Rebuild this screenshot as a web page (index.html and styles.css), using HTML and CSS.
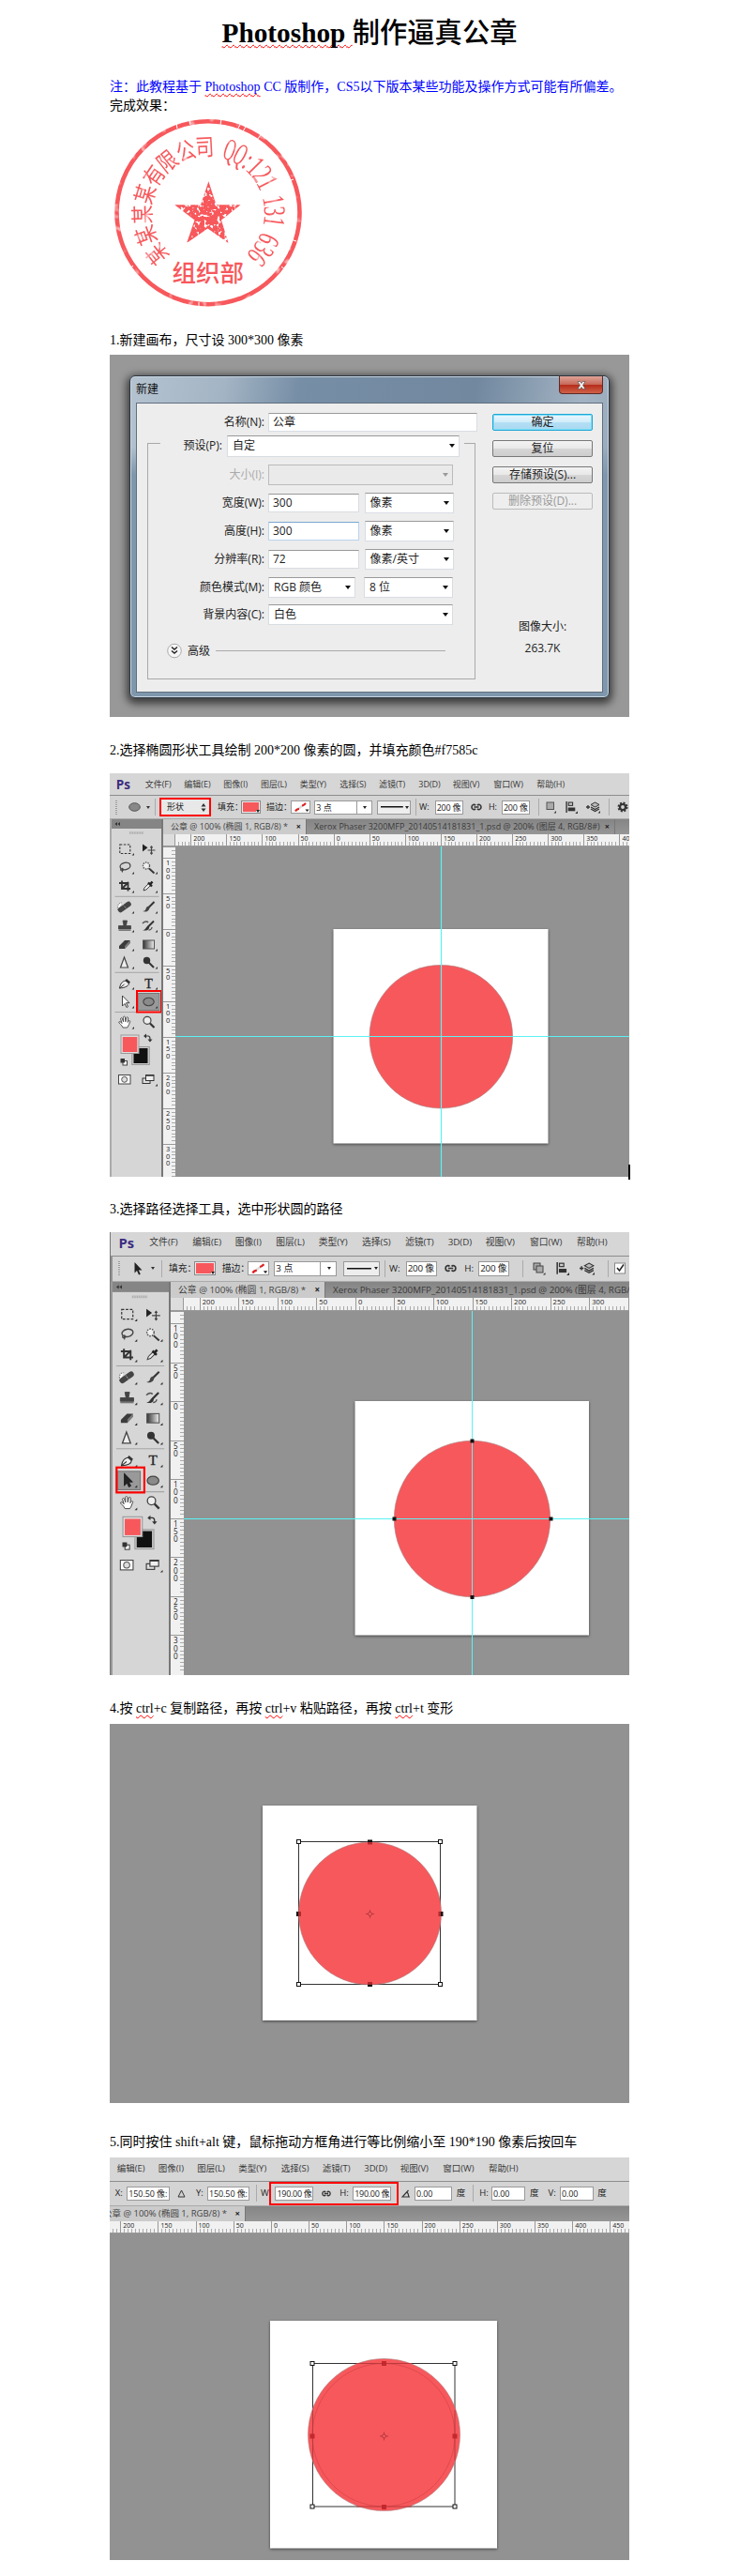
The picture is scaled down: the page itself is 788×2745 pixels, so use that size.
FILE: index.html
```html
<!DOCTYPE html>
<html lang="zh-CN">
<head>
<meta charset="utf-8">
<title>Photoshop 制作逼真公章</title>
<link rel="stylesheet" href="styles.css">
</head>
<body>
<svg class="defs" width="0" height="0">
  <symbol id="tools" viewBox="117 873 57 385" preserveAspectRatio="xMinYMin slice">
    <rect x="117" y="873" width="57" height="10" fill="#858585"/>
    <path d="M125 876v4l-2.500-2zM128 876v4l-2.500-2z" fill="#333"/>
    <path d="M138 887.500h15" stroke="#aaa" stroke-width="2.500" stroke-dasharray="1 .6"/>
    <path d="M122.500 955.300h47M122.500 1036.300h47M122.500 1078.500h47" stroke="#a5a5a5"/>
    <g fill="#333">
      <path d="M143 909v2.500h-2.500zM143 929v2.500h-2.500zM168 929v2.500h-2.500zM143 949v2.500h-2.500zM168 949v2.500h-2.500zM143 971v2.500h-2.500zM168 971v2.500h-2.500zM143 991v2.500h-2.500zM168 991v2.500h-2.500zM143 1011v2.500h-2.500zM168 1011v2.500h-2.500zM143 1030v2.500h-2.500zM168 1030v2.500h-2.500zM143 1052v2.500h-2.500zM168 1052v2.500h-2.500zM143 1072v2.500h-2.500zM168 1072v2.500h-2.500zM143 1094v2.500h-2.500zM168 1155v2.500h-2.500z"/>
    </g>
    <rect x="127.800" y="900" width="11" height="9.500" fill="none" stroke="#333" stroke-width="1.100" stroke-dasharray="2.500 1.500"/>
    <path d="M152 899.500v8l5.500-4.200z" fill="#222"/>
    <path d="M161.500 902v8M157.500 906h8M160.300 903.300l1.200-1.500 1.200 1.500M160.300 908.700l1.200 1.500 1.200-1.500" fill="none" stroke="#444" stroke-width="1.100"/>
    <ellipse cx="133.500" cy="923" rx="5.500" ry="3.700" transform="rotate(-12 133.500 923)" fill="none" stroke="#444" stroke-width="1.300"/>
    <path d="M129.500 925.500c-2 1.500 0 3 1.500 2s-.5-2-.5-2v4" fill="none" stroke="#444" stroke-width="1.100"/>
    <path d="M159 925.500l5.500 5" stroke="#333" stroke-width="1.800"/>
    <circle cx="156" cy="922.500" r="3.500" fill="#eee" stroke="#555" stroke-width="1.300" stroke-dasharray="1.500 1"/>
    <path d="M127 941h9.500v8.500M130 938.500v8.500h9M130 947l7-7" fill="none" stroke="#333" stroke-width="1.800"/>
    <path d="M153 949l1-3 5-5 2 2-5 5z" fill="#eee" stroke="#444"/>
    <path d="M158 940.500l4 4M160 942.500l2.500-3" stroke="#222" stroke-width="2.400"/>
    <path d="M126 970c-1-5 0-8 4-8" fill="#fff" stroke="#777" stroke-dasharray="1.500 1"/>
    <path d="M128.500 969.500l8.500-6" stroke="#444" stroke-width="5.500" stroke-linecap="round"/>
    <path d="M131.500 964.500l3.500 4" stroke="#aaa" stroke-dasharray="1 1"/>
    <path d="M164.500 961l-6 6" stroke="#333" stroke-width="2"/>
    <path d="M159.500 966c-2-1-3.500.5-4 2.500s-2 2.300-3.500 2.500c4 1.500 8-.5 7.500-5z" fill="#444"/>
    <path d="M131 981h4.500l-1 5.500h5V990h-13v-3.500h5.500zM126.500 991.300h13" fill="#444" stroke="#444" stroke-width=".8"/>
    <path d="M164 981.500l-6 6" stroke="#333" stroke-width="2"/>
    <path d="M159 986.500c-3-1-3 4.500-7 4.500 4 1.500 8 0 7-4.500z" fill="#333"/>
    <path d="M152 984c2-2.500 5-2.500 6-1M162 988c0 2-2 3-3.500 3" fill="none" stroke="#555" stroke-width="1.400"/>
    <path d="M127 1008l6-6h6l-5.500 6zM127 1008h6.500v3H127z" fill="#3c3c3c"/>
    <path d="M133.500 1011v-3l5.500-6v3z" fill="#777"/>
    <rect x="152.500" y="1002" width="12" height="9" fill="url(#grad)" stroke="#555"/>
    <path d="M132.500 1020l4 11h-8z" fill="#eee" stroke="#444" stroke-width="1.200"/>
    <circle cx="156.500" cy="1023.500" r="3.700" fill="#333"/>
    <path d="M158.500 1025.500l5.500 5.500" stroke="#333" stroke-width="2"/>
    <path d="M127.500 1053c1-6 4-8 7.500-8l2.500 2.500c0 3-3.500 5-10 5.500zl5-4" fill="#eee" stroke="#333"/>
    <path d="M135 1043l4 3.500-1.700 2-4-3.500z" fill="#333"/>
    <text x="158.500" y="1052.500" text-anchor="middle" class="tool-t">T</text>
    <path d="M130.500 1061v11l2.500-2.500 2 4 1.500-.8-2-4h3.500z" fill="#fff" stroke="#333" stroke-width=".9"/>
    <ellipse cx="158.500" cy="1067.500" rx="5.700" ry="4.200" fill="#8a8a8a" stroke="#444" stroke-width="1.100"/>
    <path d="M131 1095c-1-3-4.500-4.500-4.300-6 .8-1 2.300 0 3.300 1.500l-1.500-5c.5-1.200 1.700-.8 2 .3l1 3-.2-5c.6-1 1.800-1 2.100 0l.4 5 1-4.500c.8-1 1.900-.4 1.900.6l-.5 4.500c1-2 2.500-2.300 2.600-1-.8 2-1.500 4.600-3 6.600z" fill="#fff" stroke="#444" stroke-width=".9"/>
    <circle cx="157" cy="1087.300" r="4" fill="#eee" stroke="#444" stroke-width="1.200"/>
    <path d="M160 1090.500l4.500 4.500" stroke="#333" stroke-width="2.200"/>
    <path d="M155 1104h3q2 0 2 3v2" fill="none" stroke="#333" stroke-width="1.200"/>
    <path d="M156 1101.500v5l-3-2.500zM157.500 1107.500h5l-2.500 3z" fill="#333"/>
    <rect x="140.800" y="1115.500" width="18.500" height="19" fill="#ccc" stroke="#999"/>
    <rect x="142.500" y="1117" width="15" height="16" fill="#111"/>
    <rect x="129" y="1103" width="19" height="19.500" fill="#ddd" stroke="#999"/>
    <rect x="130.800" y="1105" width="15.500" height="16" fill="#f7585c"/>
    <rect x="131" y="1130.500" width="4.500" height="4.500" fill="#fff" stroke="#444"/>
    <rect x="128.500" y="1128" width="4.500" height="4.500" fill="#333"/>
    <rect x="126.500" y="1145.500" width="12.500" height="9.500" fill="#fff" stroke="#444"/>
    <circle cx="132.700" cy="1150.300" r="3" fill="#ddd" stroke="#555"/>
    <rect x="152" y="1149" width="8" height="5.500" fill="#ddd" stroke="#333"/>
    <rect x="155.500" y="1145.500" width="8.500" height="6" fill="#eee" stroke="#333"/>
    <path d="M155.500 1146h8.500" stroke="#333" stroke-width="1.500"/>
  </symbol>
  <linearGradient id="grad"><stop stop-color="#333"/><stop offset="1" stop-color="#eee"/></linearGradient>
  <symbol id="link" viewBox="0 0 12 8"><path d="M5 2.200C4 .8 1 1 1 4s3 3.200 4 1.800M7 2.200C8 .8 11 1 11 4s-3 3.200-4 1.800M3.500 4h5" fill="none" stroke="#333" stroke-width="1.600"/></symbol>
  <symbol id="stroke-none" viewBox="0 0 21 14"><path d="M5 11l11-8" stroke="#ddd" stroke-width="2.500"/><path d="M5 11.500c1-2 2-2.500 4-2.500M12 5.500c1.500 0 2.500-1 4-2.500" stroke="#e02020" stroke-width="2" fill="none"/><path d="M15.500 9.500h4l-2 2.500z" fill="#222"/></symbol>
  <symbol id="align" viewBox="0 0 12 12"><path d="M1 0v11" stroke="#333" stroke-width="1.300"/><rect x="3" y="1" width="4" height="3" fill="#ccc" stroke="#333"/><path d="M2.500 6h7v3.500h-7z" fill="#333"/><path d="M12 9.500V12H9.500z" fill="#333"/></symbol>
  <symbol id="stack" viewBox="0 0 15 12"><path d="M0 5.500h4M2 3.500v4" stroke="#333" stroke-width="1.300"/><path d="M5 7.500l4.500 2.500L14 7.500M5 5.500L9.500 8 14 5.500" fill="none" stroke="#333" stroke-width="1.300"/><path d="M5 3l4.500-2.500L14 3 9.500 5.500z" fill="#bbb" stroke="#333"/><path d="M15 9.500V12h-2.500z" fill="#333"/></symbol>
  <symbol id="cross" viewBox="-5 -5 10 10"><circle r="2" fill="none" stroke="#a53338" stroke-width=".8"/><path d="M0-4.500v2.500M0 2v2.500M-4.500 0h2.500M2 0h2.500" stroke="#a53338" stroke-width=".8"/></symbol>
</svg>

<main class="doc">
  <h1 class="title"><span class="sp">Photoshop </span>制作逼真公章</h1>
  <p class="line note">注：此教程基于 <span class="sp">Photoshop</span> CC 版制作，CS5以下版本某些功能及操作方式可能有所偏差。</p>
  <p class="line">完成效果：</p>

  <svg class="seal" viewBox="117 122 210 210" width="210" height="210">
    <defs>
      <filter id="worn" x="-5%" y="-5%" width="110%" height="110%">
        <feTurbulence type="fractalNoise" baseFrequency=".28" numOctaves="2" seed="8" result="n"/>
        <feColorMatrix in="n" type="matrix" values="0 0 0 0 0  0 0 0 0 0  0 0 0 0 0  0 7 0 0 -2.050" result="m"/>
        <feComposite in="SourceGraphic" in2="m" operator="in"/>
      </filter>
      <filter id="faint" x="-5%" y="-5%" width="110%" height="110%">
        <feTurbulence type="fractalNoise" baseFrequency=".1" numOctaves="2" seed="5" result="n"/>
        <feColorMatrix in="n" type="matrix" values="0 0 0 0 0  0 0 0 0 0  0 0 0 0 0  0 3 0 0 -.2" result="m"/>
        <feComposite in="SourceGraphic" in2="m" operator="in"/>
      </filter>
    </defs>
    <circle cx="222" cy="226.700" r="97.500" fill="none" stroke="#f7585c" stroke-width="4.600" filter="url(#faint)"/>
    <path d="M142 143l3 4M150 141l2 4M188 131l1 6M202 128l1 5M236 127l-1 6M256 133l-3 5M262 135l-3 5M278 144l-4 5M313 191l-5 2M316 257l-6-2M304 287l-4-3M139 286l3-3M212 322v5" stroke="#fff"/>
    <path d="M222.400 193.300L230.500 218.300H256.500L236 234.500 243.500 259 221.500 243.500 199.100 259 207.500 234.500 186.200 218.300H214z" fill="#f7585c" filter="url(#worn)"/>
    <g class="seal-cn" transform="translate(222 226.700)" filter="url(#faint)">
      <text transform="rotate(-129) translate(0 -61) scale(.8 1)">某</text>
      <text transform="rotate(-110) translate(0 -61) scale(.8 1)">某</text>
      <text transform="rotate(-91.500) translate(0 -61) scale(.8 1)">某</text>
      <text transform="rotate(-73.500) translate(0 -61) scale(.8 1)">某</text>
      <text transform="rotate(-55.500) translate(0 -61) scale(.8 1)">有</text>
      <text transform="rotate(-38.500) translate(0 -61) scale(.8 1)">限</text>
      <text transform="rotate(-20) translate(0 -61) scale(.8 1)">公</text>
      <text transform="rotate(-3) translate(0 -61) scale(.8 1)">司</text>
    </g>
    <g class="seal-num" transform="translate(222 226.700)" filter="url(#faint)">
      <text transform="rotate(19) translate(0 -60) scale(.5 1)">Q</text>
      <text transform="rotate(29) translate(0 -60) scale(.5 1)">Q</text>
      <text transform="rotate(37.500) translate(0 -60) scale(.65 1)">:</text>
      <text transform="rotate(45.500) translate(0 -60) scale(.65 1)">1</text>
      <text transform="rotate(54.500) translate(0 -60) scale(.65 1)">2</text>
      <text transform="rotate(63) translate(0 -60) scale(.65 1)">1</text>
      <text transform="rotate(79.500) translate(0 -60) scale(.65 1)">1</text>
      <text transform="rotate(88.500) translate(0 -60) scale(.65 1)">3</text>
      <text transform="rotate(97.500) translate(0 -60) scale(.65 1)">1</text>
      <text transform="rotate(114) translate(0 -60) scale(.65 1)">6</text>
      <text transform="rotate(123.500) translate(0 -60) scale(.65 1)">3</text>
      <text transform="rotate(132.500) translate(0 -60) scale(.65 1)">6</text>
    </g>
    <text x="221.700" y="300" class="seal-dept">组织部</text>
  </svg>

  <p class="line s1">1.新建画布，尺寸设 300*300 像素</p>
  <figure class="fig fig1">
    <div class="win">
      <div class="win-bar"><span>新建</span>
        <b class="close"><svg width="10" height="9" viewBox="0 0 10 9"><path d="M1 .5h2.500L5 2.500 6.500.5H9L6.500 4.500 9 8.500H6.500L5 6.500 3.500 8.500H1l2.500-4z" fill="#fff" stroke="#555" stroke-width=".7"/></svg></b>
      </div>
      <div class="win-body">
        <div class="form">
          <div class="row name"><label>名称(N):</label><span class="in w-name">公章</span></div>
          <div class="group">
            <div class="legend"><label>预设(P):</label><span class="in sel w-preset">自定</span></div>
            <div class="row off"><label>大小(I):</label><span class="in sel w-wide"></span></div>
            <div class="row"><label>宽度(W):</label><span class="in w-num">300</span><span class="in sel w-unit">像素</span></div>
            <div class="row"><label>高度(H):</label><span class="in w-num focus">300</span><span class="in sel w-unit">像素</span></div>
            <div class="row"><label>分辨率(R):</label><span class="in w-num">72</span><span class="in sel w-unit">像素/英寸</span></div>
            <div class="row"><label>颜色模式(M):</label><span class="in sel w-mode">RGB 颜色</span><span class="in sel w-unit">8 位</span></div>
            <div class="row"><label>背景内容(C):</label><span class="in sel w-wide">白色</span></div>
            <div class="adv"><svg width="16" height="17" viewBox="0 0 16 17"><circle cx="8" cy="8.500" r="7.300" fill="#f6f6f6" stroke="#aaa"/><path d="M5 4.500l3 2.500 3-2.500M5 8.500l3 2.500 3-2.500" fill="none" stroke="#222" stroke-width="1.500"/></svg><span>高级</span><hr></div>
          </div>
        </div>
        <div class="side">
          <span class="btn primary">确定</span>
          <span class="btn">复位</span>
          <span class="btn">存储预设(S)...</span>
          <span class="btn dis">删除预设(D)...</span>
          <div class="size"><span>图像大小:</span><span>263.7K</span></div>
        </div>
      </div>
    </div>
  </figure>

  <p class="line s2">2.选择椭圆形状工具绘制 200*200 像素的圆，并填充颜色#f7585c</p>
  <figure class="fig ps fig2">
    <div class="menu"><b class="logo">Ps</b><span>文件(F)</span><span>编辑(E)</span><span>图像(I)</span><span>图层(L)</span><span>类型(Y)</span><span>选择(S)</span><span>滤镜(T)</span><span>3D(D)</span><span>视图(V)</span><span>窗口(W)</span><span>帮助(H)</span></div>
    <div class="opts">
      <i class="grip"></i>
      <svg width="13" height="10" viewBox="0 0 13 10"><ellipse cx="6.500" cy="5" rx="5.800" ry="4.300" fill="#888" stroke="#555"/></svg>
      <i class="caret"></i><i class="sep"></i>
      <span class="shape">形状<svg width="6" height="9" viewBox="0 0 6 9"><path d="M3 0l2.500 3.500h-5zM3 9L.5 5.500h5z" fill="#333"/></svg></span>
      <span>填充：</span><i class="sw"></i><span>描边：</span><svg class="sw2"><use href="#stroke-none"/></svg>
      <span class="box pts">3 点</span><span class="box stroke"></span><i class="sep"></i>
      <span>W:</span><span class="box dim">200 像</span><svg width="12" height="8"><use href="#link"/></svg><span>H:</span><span class="box dim">200 像</span><i class="sep"></i>
      <svg width="12" height="14" viewBox="0 0 12 14"><rect x="1" y="2" width="7.500" height="7.500" fill="#aaa" stroke="#555"/><path d="M11 11v2.500H8.500z" fill="#333"/></svg>
      <svg width="13" height="13"><use href="#align"/></svg><svg width="15" height="13"><use href="#stack"/></svg><i class="sep"></i>
      <svg width="12" height="12" viewBox="-6 -6 12 12"><circle r="4.500" fill="none" stroke="#333" stroke-width="2" stroke-dasharray="2 1.530"/><circle r="3" fill="none" stroke="#333" stroke-width="2.200"/></svg>
    </div>
    <div class="work">
      <div class="toolbox">
        <svg class="toolsvg" viewBox="117 873 57 385" preserveAspectRatio="xMinYMin slice"><rect x="147" y="1058.500" width="23" height="18" fill="#999" stroke="#777"/><use href="#tools" x="117" y="873" width="57" height="385"/><rect x="146" y="1056" width="26" height="22.500" fill="none" stroke="#f00" stroke-width="2"/></svg>
      </div>
      <div class="view">
        <div class="tabs"><span class="tab on">公章 @ 100% (椭圆 1, RGB/8) *<b>×</b></span><span class="tab">Xerox Phaser 3200MFP_20140514181831_1.psd @ 200% (图层 4, RGB/8#)<b>×</b></span></div>
        <div class="ruler-h"><i class="corner"></i><i class="part"></i><b>200</b><b>150</b><b>100</b><b>50</b><b>0</b><b>50</b><b>100</b><b>150</b><b>200</b><b>250</b><b>300</b><b>350</b><b>400</b></div>
        <div class="stage">
          <div class="ruler-v"><i class="part"></i><b>1<br>0<br>0</b><b>5<br>0</b><b>0</b><b>5<br>0</b><b>1<br>0<br>0</b><b>1<br>5<br>0</b><b>2<br>0<br>0</b><b>2<br>5<br>0</b><b>3<br>0<br>0</b></div>
          <svg class="canvas" viewBox="187 902 484 352" width="484" height="352">
            <rect class="paper" x="355.500" y="990" width="229" height="228.500"/>
            <circle cx="470.300" cy="1104.700" r="76.300" class="disc"/>
            <path class="guide" d="M470.500 902v352M187 1104.500h484"/>
          </svg>
        </div>
      </div>
    </div>
    <i class="ibeam"></i>
  </figure>

  <p class="line s3">3.选择路径选择工具，选中形状圆的路径</p>
  <figure class="fig ps fig3">
    <div class="menu"><b class="logo">Ps</b><span>文件(F)</span><span>编辑(E)</span><span>图像(I)</span><span>图层(L)</span><span>类型(Y)</span><span>选择(S)</span><span>滤镜(T)</span><span>3D(D)</span><span>视图(V)</span><span>窗口(W)</span><span>帮助(H)</span></div>
    <div class="opts">
      <i class="grip"></i>
      <svg width="9" height="14" viewBox="0 0 9 14"><path d="M.5 0v11.500L3 9l2 4.500 1.800-.8L4.800 8.500H8.500z" fill="#222"/></svg>
      <i class="caret"></i><i class="sep"></i>
      <span>填充：</span><i class="sw"></i><span>描边：</span><svg class="sw2"><use href="#stroke-none"/></svg>
      <span class="box pts">3 点</span><span class="box stroke"></span><i class="sep"></i>
      <span>W:</span><span class="box dim">200 像</span><svg width="13" height="9"><use href="#link"/></svg><span>H:</span><span class="box dim">200 像</span><i class="sep"></i>
      <svg width="14" height="15" viewBox="0 0 14 15"><rect x="1" y="2" width="7" height="7" fill="#aaa" stroke="#444"/><rect x="4" y="5" width="7" height="7" fill="#aaa" stroke="#444"/><path d="M13.500 12v2.500H11z" fill="#333"/></svg>
      <svg width="14" height="14"><use href="#align"/></svg><svg width="16" height="14"><use href="#stack"/></svg><i class="sep"></i>
      <svg width="12" height="13" viewBox="0 0 12 13"><rect x=".5" y="1" width="11" height="11" fill="#fff" stroke="#888"/><path d="M3 6l2.500 3L10 2.500" fill="none" stroke="#222" stroke-width="1.500"/></svg>
    </div>
    <div class="work">
      <div class="toolbox">
        <svg class="toolsvg" viewBox="117 873 57 385" preserveAspectRatio="xMinYMin slice"><rect x="123.500" y="1058.500" width="22.500" height="18" fill="#999" stroke="#777"/><use href="#tools" x="117" y="873" width="57" height="385"/><path d="M130.500 1061v11l2.500-2.500 2 4 1.500-.8-2-4h3.500z" fill="#222" stroke="#222"/><rect x="122.800" y="1054.700" width="27.200" height="24.500" fill="none" stroke="#f00" stroke-width="2"/></svg>
      </div>
      <div class="view">
        <div class="tabs"><span class="tab on">公章 @ 100% (椭圆 1, RGB/8) *<b>×</b></span><span class="tab">Xerox Phaser 3200MFP_20140514181831_1.psd @ 200% (图层 4, RGB/8#)</span></div>
        <div class="ruler-h"><i class="corner"></i><i class="part"></i><b>200</b><b>150</b><b>100</b><b>50</b><b>0</b><b>50</b><b>100</b><b>150</b><b>200</b><b>250</b><b>300</b><b></b></div>
        <div class="stage">
          <div class="ruler-v"><i class="part"></i><b>1<br>0<br>0</b><b>5<br>0</b><b>0</b><b>5<br>0</b><b>1<br>0<br>0</b><b>1<br>5<br>0</b><b>2<br>0<br>0</b><b>2<br>5<br>0</b><b>3<br>0<br>0</b></div>
          <svg class="canvas" viewBox="196 1397 475 388" width="475" height="388">
            <rect class="paper" x="378.500" y="1493" width="249.500" height="249.500"/>
            <circle cx="503.500" cy="1618.500" r="83.200" class="disc"/>
            <path class="guide thin" d="M503.500 1397v388M196 1618.500h475"/>
            <path d="M501.500 1533.500h4v4h-4zM501.500 1700h4v4h-4zM418.500 1616.500h4v4h-4zM585.500 1616.500h4v4h-4z" fill="#111"/>
          </svg>
        </div>
      </div>
    </div>
  </figure>

  <p class="line s4">4.按 <span class="sp">ctrl</span>+c 复制路径，再按 <span class="sp">ctrl</span>+v 粘贴路径，再按 <span class="sp">ctrl</span>+t 变形</p>
  <figure class="fig fig4">
    <svg class="canvas" viewBox="117 1837 554 404" width="554" height="404">
      <rect class="paper" x="280" y="1924" width="228.500" height="229"/>
      <path d="M318.500 1962.500h151v152h-151z" class="frame"/>
      <circle cx="394.500" cy="2039" r="76" class="disc"/>
      <g class="knob"><rect x="316.500" y="1960.500" width="4" height="4"/><rect x="467.500" y="1960.500" width="4" height="4"/><rect x="316.500" y="2112.500" width="4" height="4"/><rect x="467.500" y="2112.500" width="4" height="4"/></g>
      <path d="M392 1960.500h5v2.500h-5zM392 2114.500h5v2.500h-5zM316 2037h2.500v5H316zM470 2037h2.500v5H470z" fill="#111"/>
      <path d="M392 1963h5v2.500h-5zM392 2112h5v2.500h-5zM318.500 2037h2.500v5h-2.500zM467.500 2037h2.500v5h-2.500z" fill="#b5282c"/>
      <use href="#cross" x="389.500" y="2034.500" width="10" height="10"/>
    </svg>
  </figure>

  <p class="line s5">5.同时按住 shift+alt 键，鼠标拖动方框角进行等比例缩小至 190*190 像素后按回车</p>
  <figure class="fig ps fig5">
    <div class="menu"><span>编辑(E)</span><span>图像(I)</span><span>图层(L)</span><span>类型(Y)</span><span>选择(S)</span><span>滤镜(T)</span><span>3D(D)</span><span>视图(V)</span><span>窗口(W)</span><span>帮助(H)</span></div>
    <div class="opts">
      <span>X:</span><span class="box w45">150.50 像:</span><svg width="9" height="9" viewBox="0 0 9 9"><path d="M4.500 1L8 8H1z" fill="none" stroke="#333"/></svg><span>Y:</span><span class="box w45">150.50 像:</span><i class="sep"></i><span>W</span>
      <div class="mark"><span class="box">190.00 像</span><svg width="10" height="7"><use href="#link"/></svg><span>H:</span><span class="box">190.00 像</span></div>
      <svg width="10" height="9" viewBox="0 0 10 9"><path d="M9 8H1l6.500-7M6 3q2 2 1.500 5" fill="none" stroke="#333" stroke-width="1.200"/></svg><span class="box w40">0.00</span><span>度</span><i class="sep"></i><span>H:</span><span class="box w36">0.00</span><span>度</span><span>V:</span><span class="box w36">0.00</span><span>度</span>
    </div>
    <div class="tabs"><span class="tab on"><em>公</em>章 @ 100% (椭圆 1, RGB/8) *<b>×</b></span></div>
    <div class="ruler-h"><i class="part"></i><b>200</b><b>150</b><b>100</b><b>50</b><b>0</b><b>50</b><b>100</b><b>150</b><b>200</b><b>250</b><b>300</b><b>350</b><b>400</b><b>450</b></div>
    <svg class="canvas" viewBox="117 2380 554 348" width="554" height="348">
      <rect class="paper" x="288" y="2473" width="242" height="242.500"/>
      <path d="M333.500 2518.500h151.500v152.500H333.500z" class="frame"/>
      <circle cx="409.500" cy="2594.500" r="81" class="disc"/>
      <ellipse cx="409" cy="2594.700" rx="76" ry="76.200" fill="none" stroke="#d8454a" stroke-width=".8"/>
      <path d="M380 2518.500h59M380 2671h59M333.500 2568v54M485 2568v54" stroke="#b83a3e"/>
      <g class="knob"><rect x="331" y="2516.500" width="4" height="4"/><rect x="483" y="2516.500" width="4" height="4"/><rect x="331" y="2669" width="4" height="4"/><rect x="483" y="2669" width="4" height="4"/></g>
      <path d="M407 2516h5v5h-5zM407 2669h5v5h-5zM330.500 2593.500h5v5h-5zM482.500 2593.500h5v5h-5z" fill="#c3282c"/>
      <use href="#cross" x="404.500" y="2591" width="10" height="10"/>
    </svg>
  </figure>
</main>
</body>
</html>
```
FILE: styles.css
```css
body { margin: 0; background: #fff; color: #000; }
.defs { position: absolute; }
.doc { width: 554px; height: 2745px; padding: 0 117px; overflow: hidden;
  font: 14px/20px "Liberation Serif", "Noto Sans CJK SC", serif; }
.title { margin: 0 0 27px; padding-top: 16px; height: 39px; font-size: 29.3px; line-height: 39px; font-weight: 500;
  text-align: center; white-space: nowrap; }
.title .sp { font-weight: 700; white-space: pre; }
.sp { text-decoration: underline wavy #f00 .7px; text-underline-offset: 2px; text-decoration-skip-ink: none; }
.line { margin: 0; height: 20px; line-height: 22px; white-space: nowrap; }
.note { color: #00f; }
.seal { display: block; margin-bottom: 20px; }
.seal text { fill: #f7585c; text-anchor: middle; }
.seal-cn { font: 25px "Noto Sans CJK SC", sans-serif; }
.seal-num { font: 33px "Liberation Serif", serif; }
.seal-dept { font: 500 25.5px "Noto Sans CJK SC", sans-serif; }
.s2, .s4 { margin-top: 25px; }
.s3 { margin-top: 24px; }
.s5 { margin-top: 31px; }

.fig { margin: 0; width: 554px; box-sizing: border-box; overflow: hidden; position: relative;
  font-family: "Open Sans", "Noto Sans CJK SC", sans-serif; color: #222; background: #929292; }
.fig i, .fig em { font-style: normal; }

/* New document dialog */
.fig1 { height: 386px; margin-top: 6px; padding: 22px 20px 20px 21px; background: #989898; font-size: 12px; line-height: 16px; }
.win { height: 344px; width: 512px; box-sizing: border-box; border: 1px solid #2d3640; border-radius: 6px; padding: 0 6px 5px;
  display: flex; flex-direction: column;
  background: linear-gradient(180deg, transparent 0 75px, #7f97ad 105px), linear-gradient(100deg, #b5c3d0, #a3b4c4 18%, #768ea6 32%, #71889f 65%, #a3b3c3 85%, #8fa3b6);
  box-shadow: inset 0 0 0 1px #c9d7e3, 0 3px 9px 3px rgba(0,0,0,.6); }
.win-bar { height: 28px; display: flex; justify-content: space-between; }
.win-bar span { line-height: 27px; color: #111; }
.close { width: 45px; height: 18px; border: 1px solid #5c2a26; border-top: 0; border-radius: 0 0 4px 4px; display: flex; align-items: center; justify-content: center;
  background: linear-gradient(#dfa497, #c8695a 48%, #b52d1b 52%, #d0624a); }
.win-body { flex: 1; display: flex; background: #ededed; border: 1px solid #5f6f7f; box-sizing: border-box; color: #222; }
.form { width: 379px; padding: 10px 0 0 11px; box-sizing: border-box; }
.row { display: flex; align-items: center; height: 29.900px; }
.row label { width: 124px; text-align: right; margin-right: 4px; }
.row.name { height: 20px; }
.row.name label { width: 125px; }
.in { background: #fff; border: 1px solid #d8dde2; border-top: 1px solid #999; box-sizing: border-box; height: 20px; line-height: 18px; padding-left: 4px; margin-right: 5.500px; flex: none; }
.w-name { width: 223px; margin: 0; }
.group { display: flow-root; margin-top: 12px; border: 1px solid #a9a9a9; border-top: 0; width: 350px; height: 252px; box-sizing: border-box; }
.legend { height: 20px; display: flex; align-items: center; margin-top: -7px;
  background: linear-gradient(#a9a9a9, #a9a9a9) 0 7px / 13px 1px no-repeat, linear-gradient(#a9a9a9, #a9a9a9) 100% 7px / 11px 1px no-repeat; }
.legend label { width: 79px; text-align: right; margin-right: 5px; }
.group .legend + .row { margin-top: 6px; }
.sel { height: 22px; line-height: 20px; padding-left: 5px; display: flex; justify-content: space-between; }
.sel::after { content: ""; align-self: center; margin-left: auto; margin-right: 4px; border: 3.500px solid transparent; border-top: 4px solid #111; border-bottom: 0; }
.w-preset { width: 248px; height: 23px; }
.w-wide { width: 197px; }
.w-num { width: 97px; }
.w-unit { width: 95px; }
.w-mode { width: 93px; margin-right: 9px; }
.off { color: #aaa; }
.off .in { background: #eaeaea; border-color: #bbb; }
.off .sel::after { border-top-color: #999; }
.focus { border-color: #7aa7d0 #b9d4ec #b9d4ec; }
.adv { display: flex; align-items: center; margin: 15px 0 0 20px; }
.adv span { margin: 0 6px; }
.adv hr { width: 245px; margin: 0; border: 0; border-top: 1px solid #aaa; }
.side { width: 107px; padding-top: 11px; display: flex; flex-direction: column; gap: 10px; align-items: stretch; }
.btn { height: 18px; line-height: 16px; box-sizing: border-box; border: 1px solid #777; border-radius: 2px; text-align: center; white-space: nowrap;
  background: linear-gradient(#f3f3f3, #e8e8e8 50%, #d6d6d6 52%, #cdcdcd); }
.primary { border: 1.500px solid #20a5d6; background: linear-gradient(#eaf7fd, #d0ecfa 50%, #b4dff5 52%, #a8d8f0); box-shadow: inset 0 0 0 1px #7fe0f8; }
.dis { color: #999; border-color: #bbb; background: #eee; }
.size { margin-top: 107px; text-align: center; display: flex; flex-direction: column; gap: 7px; }

/* Photoshop windows */
.ps { --k: 1; display: flex; flex-direction: column; font-size: 9px; }
.menu { background: #d6d6d6; display: grid; align-items: center; white-space: nowrap; box-sizing: border-box; flex: none; color: #3a3a3a; }
.menu span { line-height: 14px; }
.logo { font: 700 calc(13.500px * var(--k))/14px "Open Sans", sans-serif; color: #3b2d80; }
.opts { background: #d4d4d4; border-top: 1px solid #8d8d8d; border-bottom: 1px solid #aaa; display: grid; align-items: center; justify-items: start; white-space: nowrap; box-sizing: border-box; flex: none; overflow: hidden; }
.opts span { line-height: 12px; }
.opts svg { display: block; }
.grip { width: 2px; height: 15px; background: repeating-linear-gradient(#999 0 1px, #ddd 1px 2px); }
.caret { border: 2.500px solid transparent; border-top: 3px solid #333; border-bottom: 0; }
.sep { width: 1px; height: 18px; background: #aaa; }
.shape { width: 55px; height: 20px; box-sizing: border-box; border: 2px solid #f00; background: #e8e8e8; display: flex; align-items: center; justify-content: space-between; padding: 0 3px 0 6px; }
.sw { box-sizing: border-box; width: calc(21px * var(--k)); height: calc(14px * var(--k)); border: 1px solid #888; box-shadow: inset 0 0 0 1px #eee;
  background: #f7585c; display: flex; align-items: flex-end; justify-content: flex-end; }
.sw::after { content: ""; border: 2px solid transparent; border-top: 3px solid #222; border-bottom: 0; background: #eee; }
.sw2 { width: calc(21px * var(--k)); height: calc(14px * var(--k)); background: #fff; outline: 1px solid #999; outline-offset: -1px; }
.box { background: #fff; border: 1px solid #999; box-sizing: border-box; height: calc(15px * var(--k)); line-height: calc(13px * var(--k)) !important; padding-left: 1px; overflow: hidden; display: flex; justify-content: space-between; align-items: center; }
.pts { width: calc(61.500px * var(--k)); padding-right: 5px; background: linear-gradient(#999, #999) right calc(15px * var(--k)) top / 1px 100% no-repeat, #fff; }
.pts::after, .stroke::after { content: ""; border: 2px solid transparent; border-top: 3px solid #222; border-bottom: 0; }
.stroke { width: calc(36px * var(--k)); padding: 0 1px 0 2px; background: linear-gradient(#111, #111) 3px 50% / 70% 1.500px no-repeat, #eee; justify-content: flex-end; }
.dim { width: calc(30.500px * var(--k)); letter-spacing: -.2px; }
.work { display: flex; flex: 1; min-height: 0; }
.toolbox { flex: none; background: #d6d6d6; border-right: 2px solid #777; box-sizing: border-box; overflow: hidden; }
.toolsvg { display: block; width: 100%; height: 100%; }
.tool-t { font: 14px "Liberation Serif", serif; fill: #222; stroke: #222; stroke-width: .3px; }
.view { flex: 1; min-width: 0; display: flex; flex-direction: column; }
.tabs { display: flex; background: linear-gradient(#858585, #969696); height: calc(16px * var(--k)); flex: none; overflow: hidden; white-space: nowrap; line-height: calc(16px * var(--k)); }
.tab { flex: none; display: flex; justify-content: space-between; color: #3a3a3a; border-right: 1px solid #777; box-sizing: border-box; padding: 0 5px 0 8px; }
.tab.on { background: #cbcbcb; color: #444; }
.tab b { color: #222; }
.ruler-h { display: flex; flex: none; background: #f1f1f1; overflow: hidden; font-size: calc(7px * var(--k)); line-height: calc(9px * var(--k)); border-bottom: 1px solid #999; box-sizing: border-box; }
.ruler-h b, .ruler-h .part { font-weight: 400; flex: none; box-sizing: border-box; width: var(--s); border-left: 1px solid #999; padding-left: 2px;
  background: repeating-linear-gradient(90deg, #aaa 0 1px, transparent 1px calc(var(--s) / 10)) -1px 100% / 100% 4px no-repeat; }
.ruler-h .corner { flex: none; width: calc(12px * var(--k)); background: #ddd; }
.stage { display: flex; flex: 1; min-height: 0; }
.ruler-v { flex: none; overflow: hidden; background: #f1f1f1; font-size: calc(7.500px * var(--k)); line-height: calc(7.600px * var(--k)); box-sizing: border-box; display: flex; flex-direction: column; }
.ruler-v b, .ruler-v .part { font-weight: 400; flex: none; box-sizing: border-box; height: var(--s); border-top: 1px solid #999; padding-left: 3px; padding-top: 1px;
  background: repeating-linear-gradient(#aaa 0 1px, transparent 1px calc(var(--s) / 10)) 100% -1px / 4px 100% no-repeat; }
.canvas { display: block; flex: none; }
.paper { fill: #fff; filter: drop-shadow(0 1.500px 1.500px rgba(0,0,0,.55)); }
.disc { fill: #f7585c; stroke: #a77; stroke-width: .6px; }
.guide { stroke: #5cf2f4; stroke-width: 1.200px; fill: none; }
.guide.thin { stroke-width: 1px; }
.frame { fill: none; stroke: #333; stroke-width: 1px; }
.knob { fill: #fff; stroke: #111; }

.fig2 { --s: 38.100px; height: 430px; margin-top: 15px; overflow: visible; }
.fig2 .menu { height: 23px; padding-left: 6.700px; grid-template-columns: 31px 41.600px 42px 39.700px 41.700px 42.600px 41.700px 42.300px 36.400px 43.600px 46px 60px; }
.fig2 .opts { height: 26px; padding-left: 6px; grid-template-columns: 13.700px 19.300px 9px 5px 62px 25.300px 26.700px 25.700px 25.600px 67px 40.700px 4px 16.700px 38.300px 19px 14px 39px 8px 21px 22px 24px 9px 13px; }
.fig2 .toolbox { width: 57px; border-left: 2px solid #aaa; }
.fig2 .toolsvg { width: 57px; height: 385px; margin-left: -2px; }
.fig2 .tab.on { width: 153px; }
.fig2 .tab + .tab { width: 329px; }
.fig2 .ruler-h { height: 13px; }
.fig2 .ruler-h .part { width: 17.300px; }
.fig2 .ruler-v { width: 13px; }
.fig2 .ruler-v .part { height: 12.300px; }
.fig2 .work { overflow: hidden; }
.ibeam { position: absolute; right: -1px; bottom: -3px; width: 2px; height: 16px; background: #000; }

.fig3 { --k: 1.090; --s: 41.550px; height: 472px; margin-top: 15px; font-size: 9.800px; border-left: 1px solid #777; }
.fig3 .menu { height: 24.500px; padding-left: 8.500px; grid-template-columns: 32.800px 46px 45.400px 43.600px 45.400px 46.300px 46px 45.700px 40px 47.300px 50px 56px; }
.fig3 .menu > * { margin-top: -2px; }
.fig3 .opts { height: 28.500px; padding-left: 5.700px; margin-left: 2px; grid-template-columns: 17.300px 18px 10.700px 8.300px 27.300px 29.400px 27.600px 28px 73.400px 44.300px 5px 17.700px 41.300px 21.300px 15px 46.700px 11px 25px 25px 29.700px 7.300px 16px; }
.fig3 .toolbox { width: 64px; border-left: 2px solid #999; }
.fig3 .toolsvg { width: 62px; height: 419px; margin-left: -2px; }
.fig3 .tab.on { width: 165px; }
.fig3 .ruler-h { height: 13.560px; }
.fig3 .ruler-h .corner { width: 13px; }
.fig3 .ruler-h .part { width: 17.700px; }
.fig3 .ruler-v { width: 14px; }
.fig3 .ruler-v .part { height: 13px; }

.fig4 { height: 404px; margin-top: 7px; }

.fig5 { --s: 40.170px; height: 429px; margin-top: 7px; font-size: 9.500px; }
.fig5 .menu { height: 24.500px; padding-left: 7.700px; grid-template-columns: 44px 41.600px 44px 45.400px 44px 44.600px 38.400px 45.600px 48.700px 60px; }
.fig5 .opts { height: 27px; padding-left: 5.700px; grid-template-columns: 12.600px 53.700px 20px 12px 52px 5px 9px 140.700px 14.300px 44.700px 17.600px 7px 12.700px 41px 19.700px 12.300px 40.300px 20px; }
.fig5 .box { font-size: 9px; letter-spacing: -.1px; }
.mark { width: 138px; height: 25px; box-sizing: border-box; border: 2px solid #f00; display: grid; align-items: center; padding-left: 4.500px; grid-template-columns: 49.500px 19.300px 14px 41px; }
.fig5 .mark .box { width: 41px; letter-spacing: -.3px; }
.w45 { width: 45.500px; }
.w40 { width: 40.500px; }
.w36 { width: 36.500px; }
.fig5 .tab.on { display: block; width: 145px; padding-left: 0; }
.fig5 .tab em { margin-left: -7px; }
.fig5 .tab b { float: right; }
.fig5 .ruler-h { height: 13.500px; }
.fig5 .ruler-h .part { width: 11.300px; border-left: 0; }
```
